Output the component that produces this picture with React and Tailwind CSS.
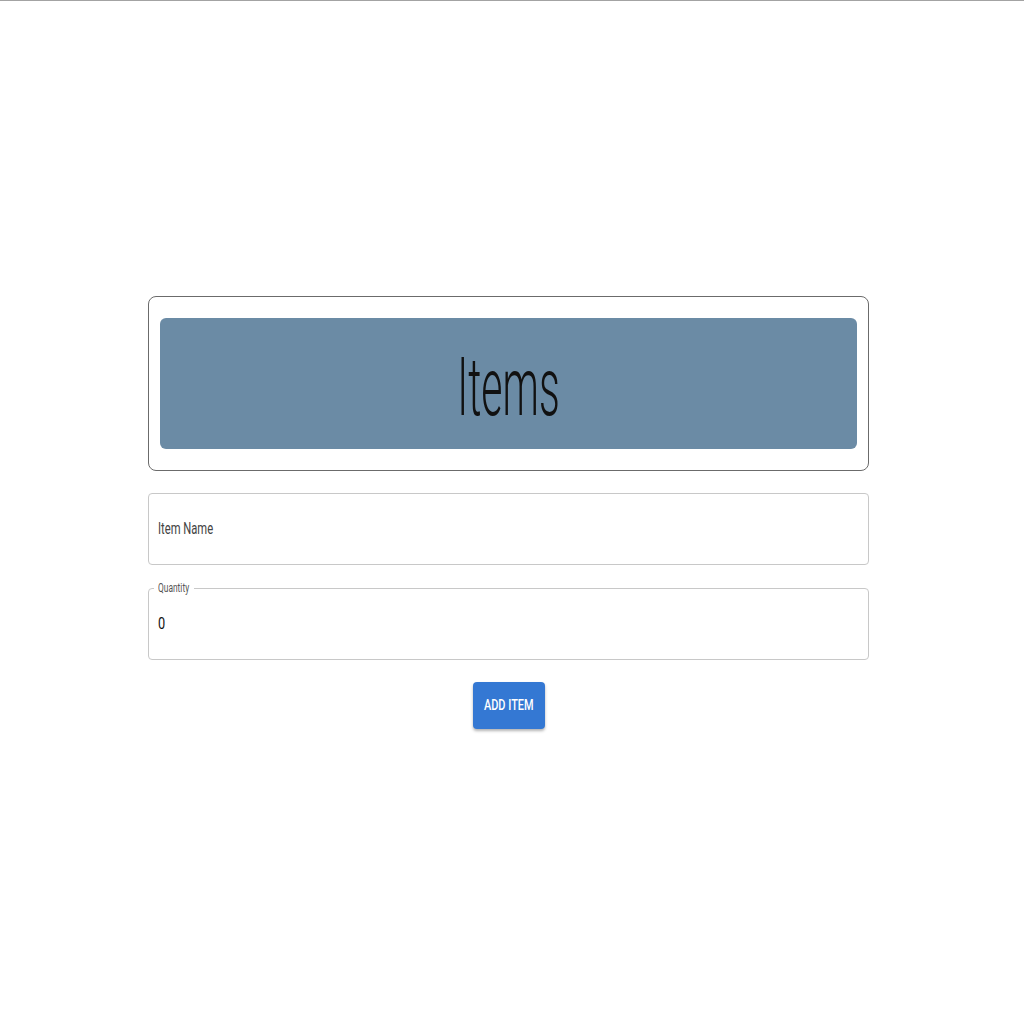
import { useState } from 'react';

export default function App() {
  const [name, setName] = useState('');
  const [qty, setQty] = useState('0');

  return (
    <div className="h-screen border-t border-[#a3a3a3] bg-white flex flex-col justify-center items-center pr-[7px]" style={{ fontFamily: 'Roboto, "Liberation Sans", sans-serif' }}>
      <div className="w-[721px] flex flex-col">
        {/* Header card */}
        <div className="border border-[#6b6b6b] rounded-[8px] px-[11px] pt-[21px] pb-[21px]">
          <div className="h-[131px] bg-[#6b8ba5] rounded-[6px] flex items-center justify-center">
            <span className="inline-block text-[82px] font-light text-[#111] leading-none scale-x-[0.5] origin-center pt-[6px]">Items</span>
          </div>
        </div>

        {/* Item name */}
        <div className="mt-[22px] h-[72px] border border-[#c8c8c8] rounded-[4px] flex items-center px-[9px]">
          <div className="relative w-full">
            {name === '' && (
              <span className="absolute left-0 top-1/2 -translate-y-1/2 pointer-events-none">
                <span className="inline-block text-[16px] text-[#444] scale-x-[0.7] origin-left whitespace-nowrap">Item Name</span>
              </span>
            )}
            <input
              value={name}
              onChange={(e) => setName(e.target.value)}
              className="w-full bg-transparent outline-none text-[16px] text-[#111]"
            />
          </div>
        </div>

        {/* Quantity */}
        <div className="relative mt-[23px] h-[72px] border border-[#c8c8c8] rounded-[4px] flex items-center px-[9px]">
          <div className="absolute left-[5px] -top-[8px] bg-white px-[4px] h-[14px] w-[40px] flex items-center">
            <span className="block text-[12px] leading-[14px] text-[#555] scale-x-[0.7] origin-left whitespace-nowrap">Quantity</span>
          </div>
          <input
            value={qty}
            onChange={(e) => setQty(e.target.value)}
            className="w-full bg-transparent outline-none text-[17px] text-[#111] scale-x-[0.75] origin-left"
          />
        </div>

        {/* Button */}
        <div className="mt-[22px] flex justify-center">
          <button className="w-[72px] h-[47px] bg-[#3478d3] rounded-[4px] shadow-[0_2px_3px_rgba(0,0,0,0.3)] flex items-center justify-center">
            <span className="inline-block text-[14px] font-medium text-white uppercase scale-x-[0.78] whitespace-nowrap">Add Item</span>
          </button>
        </div>
      </div>
    </div>
  );
}
